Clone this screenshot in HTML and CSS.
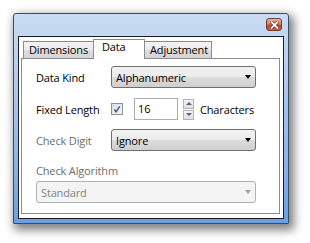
FILE: index.html
```html
<!DOCTYPE html>
<html lang="en">
<head>
    <meta charset="UTF-8">
    <title>Barcode Properties</title>
    <link rel="stylesheet" href="styles.css">
</head>
<body>
    <div class="window">
        <div class="titlebar">
            <div class="close-button">
                <svg width="9" height="8" viewBox="0 0 9 8">
                    <path d="M1.5 1 L7.5 7 M7.5 1 L1.5 7" stroke="#5a2a20" stroke-width="3.2" stroke-linecap="square"/>
                    <path d="M1.5 1 L7.5 7 M7.5 1 L1.5 7" stroke="#ffffff" stroke-width="1.8" stroke-linecap="square"/>
                </svg>
            </div>
        </div>

        <div class="client">
            <div class="tabs">
                <div class="tab tab-dimensions">Dimensions</div>
                <div class="tab tab-data active">Data</div>
                <div class="tab tab-adjustment">Adjustment</div>
            </div>

            <div class="panel">
                <div class="row">
                    <span class="label">Data Kind</span>
                    <div class="combo">
                        <span>Alphanumeric</span>
                        <i class="arrow"></i>
                    </div>
                </div>

                <div class="row fixed-row">
                    <span class="label">Fixed Length</span>
                    <div class="checkbox">
                        <svg width="11" height="11" viewBox="0 0 11 11">
                            <path d="M2.5 5.5 L4.5 8 L8.5 2" fill="none" stroke="#3f5a92" stroke-width="1.6"/>
                        </svg>
                    </div>
                    <div class="textbox">16</div>
                    <div class="spinner">
                        <div class="spin-btn"><i class="spin-up"></i></div>
                        <div class="spin-btn"><i class="spin-down"></i></div>
                    </div>
                    <span class="unit">Characters</span>
                </div>

                <div class="row digit-row">
                    <span class="label disabled">Check Digit</span>
                    <div class="combo">
                        <span>Ignore</span>
                        <i class="arrow"></i>
                    </div>
                </div>

                <div class="algorithm">
                    <span class="caption disabled">Check Algorithm</span>
                    <div class="combo combo-wide disabled-combo">
                        <span>Standard</span>
                        <i class="arrow"></i>
                    </div>
                </div>
            </div>
        </div>
    </div>
</body>
</html>
```

FILE: styles.css
```css
body {
    margin: 0;
    padding: 0;
    width: 310px;
    height: 243px;
    background-color: #ffffff;
    font-family: "Open Sans", "Liberation Sans", sans-serif;
    font-size: 11px;
    letter-spacing: -0.15px;
    color: #000000;
    overflow: hidden;
}

.window {
    box-sizing: border-box;
    width: 276px;
    height: 211px;
    margin: 13px 0 0 13px;
    display: flex;
    flex-direction: column;
    border: 1px solid #3a4c62;
    border-radius: 3px 3px 0 0;
    background: linear-gradient(to bottom, #c9dcf3 0%, #bcd2f1 20%, #8fb3ea 70%, #6e9de6 100%);
    box-shadow: 3px 4px 10px 2px rgba(0, 0, 0, 0.5);
}

.titlebar {
    height: 22px;
    display: flex;
    justify-content: flex-end;
    align-items: flex-start;
    padding-right: 6px;
}

.close-button {
    box-sizing: border-box;
    width: 16px;
    height: 13px;
    margin-top: 4px;
    display: flex;
    align-items: center;
    justify-content: center;
    border: 1px solid #7a3a2c;
    border-radius: 3px;
    background: linear-gradient(to bottom, #eab09c 0%, #dc8468 45%, #c7462b 55%, #d05a3a 100%);
}

.client {
    flex: 1;
    margin: 0 4px 4px 4px;
    border: 1px solid #1c1c1c;
    background-color: #ffffff;
    padding: 2px 3px 4px 2px;
    display: flex;
    flex-direction: column;
}

.tabs {
    display: flex;
    height: 19px;
    padding-left: 2px;
    position: relative;
    z-index: 1;
}

.tab {
    box-sizing: border-box;
    height: 17px;
    margin-top: 2px;
    padding: 0 0 0 5px;
    border: 1px solid #898c95;
    border-bottom: none;
    background: linear-gradient(to bottom, #f3f3f3 0%, #ebebeb 50%, #dedede 50%, #d4d4d4 100%);
    line-height: 15px;
}

.tab + .tab {
    margin-left: -1px;
}

.tab-dimensions {
    width: 71px;
}

.tab-data {
    width: 52px;
}

.tab-adjustment {
    width: 68px;
}

.tab.active {
    height: 20px;
    margin-top: 0;
    padding-left: 8px;
    background: #ffffff;
    line-height: 14px;
    position: relative;
    z-index: 2;
}

.panel {
    flex: 1;
    border: 1px solid #898c95;
    background-color: #ffffff;
    padding: 7px 0 0 14px;
}

.row {
    display: flex;
    align-items: center;
    height: 22px;
}

.fixed-row {
    margin-top: 10px;
}

.digit-row {
    margin-top: 9px;
}

.label {
    width: 75px;
    flex-shrink: 0;
}

.disabled {
    color: #6d6d6d;
}

.combo {
    box-sizing: border-box;
    width: 145px;
    height: 22px;
    display: flex;
    align-items: center;
    justify-content: space-between;
    padding: 0 4px 0 4px;
    border: 1px solid #707070;
    border-radius: 3px;
    background: linear-gradient(to bottom, #f2f2f2 0%, #ebebeb 50%, #dddddd 50%, #cfcfcf 100%);
}

.arrow {
    width: 0;
    height: 0;
    border-left: 3.5px solid transparent;
    border-right: 3.5px solid transparent;
    border-top: 4px solid #000000;
}

.checkbox {
    box-sizing: border-box;
    width: 12px;
    height: 12px;
    border: 1px solid #8e8f8f;
    background: linear-gradient(to bottom right, #dcdcdc, #f6f6f6);
    display: flex;
    align-items: center;
    justify-content: center;
}

.textbox {
    box-sizing: border-box;
    width: 44px;
    height: 22px;
    margin-left: 11px;
    padding: 0 3px;
    border: 1px solid #abadb3;
    background: #ffffff;
    line-height: 20px;
}

.spinner {
    display: flex;
    flex-direction: column;
    gap: 1px;
    margin-left: 5px;
}

.spin-btn {
    box-sizing: border-box;
    width: 11px;
    height: 10px;
    border: 1px solid #b1b5ba;
    background: linear-gradient(to bottom, #f4f4f4, #dedede);
    display: flex;
    align-items: center;
    justify-content: center;
}

.spin-up {
    width: 0;
    height: 0;
    border-left: 3px solid transparent;
    border-right: 3px solid transparent;
    border-bottom: 3px solid #4d6185;
}

.spin-down {
    width: 0;
    height: 0;
    border-left: 3px solid transparent;
    border-right: 3px solid transparent;
    border-top: 3px solid #4d6185;
}

.unit {
    margin-left: 6px;
}

.algorithm {
    margin-top: 12px;
    display: flex;
    flex-direction: column;
    align-items: flex-start;
    gap: 3px;
}

.combo-wide {
    width: 220px;
}

.disabled-combo {
    border-color: #adb2b5;
    background: #f4f4f4;
    color: #838383;
}

.disabled-combo .arrow {
    border-top-color: #a0a0a0;
}
```
